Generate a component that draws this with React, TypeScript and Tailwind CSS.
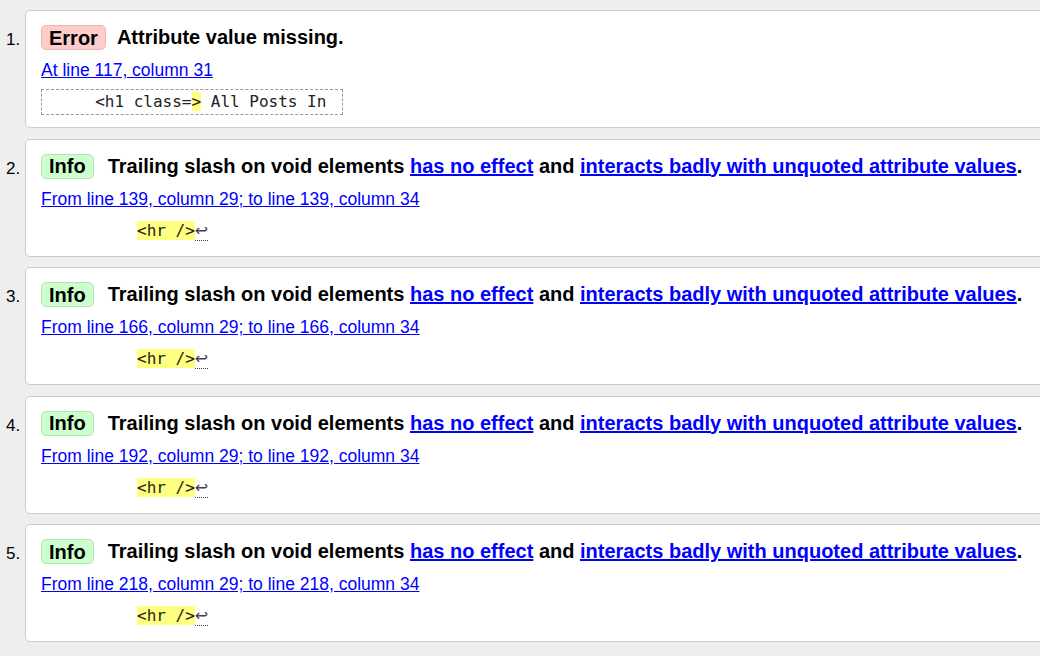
import React from 'react';

type Msg = {
  kind: 'Error' | 'Info';
  location: string;
};

const sans = { fontFamily: '"Liberation Sans", Arial, sans-serif' };
const mono = { fontFamily: '"DejaVu Sans Mono", "Liberation Mono", monospace' };

function Badge({ kind }: { kind: 'Error' | 'Info' }) {
  const cls =
    kind === 'Error'
      ? 'bg-[#ffcccc] border-[#eeb4b4] mr-[11px]'
      : 'bg-[#ccffcc] border-[#b8e0b8] mr-[14px]';
  return (
    <span
      className={`inline-flex items-center h-[25px] px-[7px] border rounded-[5px] text-[20px] font-bold text-black leading-none ${cls}`}
    >
      {kind}
    </span>
  );
}

function TrailingSlashTitle() {
  return (
    <span className="text-[20px] font-bold text-black leading-[25px] whitespace-nowrap">
      Trailing slash on void elements{' '}
      <a href="#" className="text-[#0000ff] underline">has no effect</a>
      {' '}and{' '}
      <a href="#" className="text-[#0000ff] underline">interacts badly with unquoted attribute values</a>
      .
    </span>
  );
}

function Card({ n, kind, location, children }: { n: number; kind: 'Error' | 'Info'; location: string; children: React.ReactNode }) {
  return (
    <li className="flex items-start">
      <span className="w-[25px] shrink-0 text-[17px] text-black pt-[21px] pl-[6px] leading-[18px]">{n}.</span>
      <div className="shrink-0 w-[1040px] bg-white border border-[#cccccc] rounded-[5px] pt-[14px] pl-[15px] pb-[12px]">
        <div className="flex items-center h-[25px]">
          <Badge kind={kind} />
          {kind === 'Error' ? (
            <span className="text-[20px] font-bold text-black leading-[25px]">Attribute value missing.</span>
          ) : (
            <TrailingSlashTitle />
          )}
        </div>
        <p className="mt-[10px] text-[17.5px] leading-[20px]">
          <a href="#" className="text-[#0000ff] underline">{location}</a>
        </p>
        {children}
      </div>
    </li>
  );
}

function HrExtract() {
  return (
    <div className="mt-[9px] py-[3px] pl-[96px] text-[16px] leading-[20px] text-[#222] whitespace-pre" style={mono}>
      <span className="bg-[#ffff80]">{'<hr />'}</span>
      <span
        className="text-[#444] border-b border-dotted border-[#444] text-[16px] leading-[16px]"
        style={{ fontFamily: '"DejaVu Sans", sans-serif' }}
      >
        ↩
      </span>
    </div>
  );
}

export default function App() {
  const infos: Msg[] = [
    { kind: 'Info', location: 'From line 139, column 29; to line 139, column 34' },
    { kind: 'Info', location: 'From line 166, column 29; to line 166, column 34' },
    { kind: 'Info', location: 'From line 192, column 29; to line 192, column 34' },
    { kind: 'Info', location: 'From line 218, column 29; to line 218, column 34' },
  ];

  return (
    <div className="w-[1040px] h-[656px] overflow-hidden bg-[#eeeeee] pt-[10px]" style={sans}>
      <ol className="flex flex-col gap-[10.5px]">
        <Card n={1} kind="Error" location="At line 117, column 31">
          <div className="mt-[9px]">
            <div
              className="inline-block border border-dashed border-[#999999] py-[2px] pl-[5px] pr-[6px] text-[16px] leading-[20px] text-[#222] whitespace-pre"
              style={mono}
            >
              {'     <h1 class='}
              <span className="bg-[#ffff80]">{'>'}</span>
              {' All Posts In '}
            </div>
          </div>
        </Card>
        {infos.map((m, i) => (
          <Card key={i} n={i + 2} kind={m.kind} location={m.location}>
            <HrExtract />
          </Card>
        ))}
      </ol>
    </div>
  );
}
